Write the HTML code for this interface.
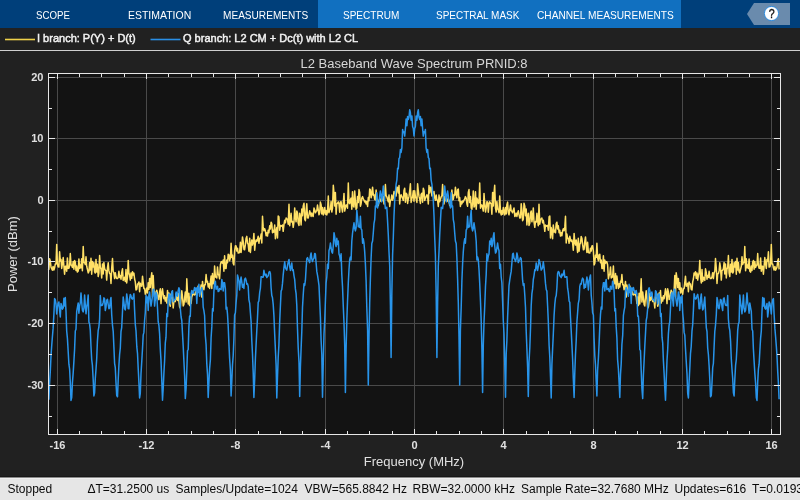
<!DOCTYPE html>
<html><head><meta charset="utf-8"><style>
html,body{margin:0;padding:0;}
body{width:800px;height:500px;overflow:hidden;background:#212121;position:relative;font-family:"Liberation Sans",sans-serif;}
.tb{position:absolute;left:0;top:0;width:800px;height:28px;background:#003f7a;}
.tb .sel{position:absolute;left:318px;top:0;width:363px;height:28px;background:#1170c0;}
.tab{position:absolute;top:7.7px;height:14px;color:#fff;font-size:11px;line-height:14px;white-space:nowrap;}
.tab span{display:inline-block;transform-origin:0 0;}
.leg{position:absolute;top:31.6px;color:#f2f2f2;font-size:11px;font-weight:normal;-webkit-text-stroke:0.45px #f2f2f2;line-height:12px;white-space:nowrap;}
.sb{position:absolute;left:0;top:476px;width:800px;height:24px;background:linear-gradient(#181818 0 1px,#8a8a8a 1px 2px,#f0f0f0 2px 3px,#e6e6e6 3px);}
.sb span{position:absolute;top:7px;font-size:12px;line-height:13px;color:#0a0a0a;white-space:nowrap;}
svg{position:absolute;left:0;top:0;will-change:transform;}
.tb,.sb,.leg{will-change:transform;}
</style></head><body>
<div class="tb"><div class="sel"></div><div class="tab" style="left:35.70px"><span style="transform:scaleX(0.88)">SCOPE</span></div><div class="tab" style="left:127.55px"><span style="transform:scaleX(0.952)">ESTIMATION</span></div><div class="tab" style="left:222.55px"><span style="transform:scaleX(0.917)">MEASUREMENTS</span></div><div class="tab" style="left:342.55px"><span style="transform:scaleX(0.911)">SPECTRUM</span></div><div class="tab" style="left:435.55px"><span style="transform:scaleX(0.907)">SPECTRAL MASK</span></div><div class="tab" style="left:536.80px"><span style="transform:scaleX(0.923)">CHANNEL MEASUREMENTS</span></div></div>
<svg width="800" height="500" viewBox="0 0 800 500">
<polygon points="747,14 754,3 790,3 790,25 754,25" fill="#6a8bad"/>
<circle cx="771.5" cy="13.5" r="7.1" fill="#fff" stroke="#2d8ce0" stroke-width="1"/>
<text x="771.6" y="18" text-anchor="middle" font-family="Liberation Sans" font-size="12.5" fill="#111" stroke="#111" stroke-width="0.35" transform="translate(771.6 0) scale(0.85 1) translate(-771.6 0)">?</text>
<line x1="5" y1="39.5" x2="35" y2="39.5" stroke="#f0d24a" stroke-width="1.6"/>
<line x1="150.5" y1="39.5" x2="180.5" y2="39.5" stroke="#2a8fe6" stroke-width="1.6"/>
<line x1="0" y1="50.5" x2="800" y2="50.5" stroke="#cfcfcf" stroke-width="1"/>
<rect x="48.5" y="73.5" width="732" height="361" fill="#131313" stroke="none"/>
<path d="M57.5 74V434M146.5 74V434M235.5 74V434M325.5 74V434M414.5 74V434M503.5 74V434M593.5 74V434M682.5 74V434M771.5 74V434M49 77.5H780M49 138.5H780M49 200.5H780M49 261.5H780M49 323.5H780M49 385.5H780" stroke="#4a4a4a" stroke-width="1" fill="none"/>
<g fill="none" stroke-width="1.5" stroke-linejoin="round">
<path d="M48.1 268.9 48.9 269.4 49.6 258.7 50.3 260.8 51.0 267.2 51.7 268.6 52.4 270.2 53.1 266.5 53.9 270.0 54.6 267.8 55.3 263.9 56.0 264.0 56.7 244.4 57.4 263.5 58.1 266.8 58.9 267.1 59.6 251.7 60.3 261.1 61.0 259.4 61.7 268.5 62.4 263.9 63.2 257.6 63.9 266.2 64.6 274.2 65.3 266.3 66.0 266.3 66.7 271.2 67.4 257.9 68.2 268.4 68.9 268.2 69.6 265.8 70.3 253.6 71.0 264.9 71.7 265.4 72.4 267.4 73.2 261.6 73.9 269.3 74.6 260.5 75.3 262.0 76.0 270.4 76.7 266.1 77.4 272.1 78.2 271.1 78.9 258.9 79.6 268.4 80.3 264.9 81.0 267.7 81.7 258.8 82.4 270.7 83.2 246.4 83.9 262.6 84.6 262.6 85.3 264.6 86.0 256.7 86.7 266.3 87.4 269.2 88.2 272.9 88.9 271.6 89.6 262.5 90.3 270.1 91.0 258.3 91.7 274.3 92.4 261.4 93.2 267.1 93.9 262.7 94.6 271.9 95.3 273.0 96.0 259.4 96.7 271.9 97.4 264.3 98.2 276.5 98.9 273.1 99.6 255.6 100.3 267.1 101.0 269.2 101.7 277.9 102.5 264.0 103.2 274.0 103.9 262.5 104.6 268.5 105.3 270.3 106.0 270.4 106.7 280.1 107.5 267.6 108.2 262.8 108.9 270.9 109.6 273.5 110.3 273.9 111.0 283.4 111.7 268.0 112.5 258.6 113.2 271.2 113.9 273.1 114.6 278.6 115.3 272.7 116.0 276.8 116.7 278.6 117.5 278.6 118.2 277.4 118.9 271.3 119.6 277.4 120.3 275.6 121.0 279.2 121.7 272.6 122.5 268.8 123.2 280.4 123.9 279.3 124.6 277.3 125.3 281.4 126.0 269.6 126.7 283.0 127.5 277.0 128.2 260.4 128.9 273.0 129.6 275.2 130.3 280.1 131.0 273.0 131.7 278.3 132.5 271.7 133.2 274.9 133.9 273.1 134.6 279.0 135.3 281.9 136.0 290.0 136.8 289.2 137.5 284.1 138.2 284.0 138.9 281.9 139.6 291.8 140.3 283.3 141.0 285.4 141.8 286.2 142.5 276.2 143.2 282.3 143.9 288.6 144.6 288.4 145.3 294.2 146.0 291.9 146.8 287.9 147.5 293.0 148.2 282.8 148.9 289.2 149.6 278.5 150.3 287.5 151.0 278.5 151.8 272.8 152.5 296.4 153.2 275.6 153.9 290.7 154.6 291.1 155.3 300.2 156.0 295.2 156.8 290.2 157.5 294.0 158.2 298.5 158.9 299.6 159.6 291.9 160.3 288.8 161.0 303.6 161.8 292.6 162.5 288.8 163.2 294.3 163.9 298.7 164.6 295.8 165.3 301.1 166.0 297.6 166.8 303.1 167.5 290.5 168.2 297.1 168.9 292.9 169.6 303.7 170.3 306.3 171.0 294.1 171.8 297.8 172.5 297.1 173.2 308.0 173.9 301.4 174.6 300.0 175.3 301.6 176.1 293.8 176.8 299.0 177.5 300.5 178.2 293.3 178.9 301.3 179.6 306.8 180.3 308.0 181.1 298.3 181.8 290.8 182.5 296.7 183.2 306.0 183.9 304.4 184.6 298.4 185.3 291.9 186.1 302.1 186.8 278.8 187.5 293.0 188.2 303.9 188.9 293.3 189.6 305.6 190.3 297.0 191.1 303.4 191.8 296.7 192.5 295.4 193.2 290.9 193.9 294.5 194.6 295.0 195.3 294.4 196.1 291.2 196.8 295.3 197.5 290.7 198.2 285.9 198.9 289.3 199.6 289.9 200.3 292.3 201.1 285.0 201.8 297.1 202.5 281.4 203.2 286.5 203.9 289.7 204.6 284.8 205.3 284.7 206.1 274.5 206.8 282.1 207.5 281.3 208.2 286.9 208.9 283.8 209.6 288.5 210.4 282.1 211.1 276.0 211.8 288.4 212.5 273.6 213.2 283.8 213.9 282.8 214.6 266.0 215.4 276.8 216.1 277.3 216.8 277.9 217.5 266.9 218.2 274.0 218.9 275.4 219.6 278.8 220.4 264.8 221.1 262.0 221.8 261.6 222.5 263.2 223.2 260.1 223.9 271.2 224.6 255.7 225.4 268.5 226.1 268.5 226.8 259.9 227.5 262.7 228.2 254.3 228.9 254.9 229.6 260.7 230.4 257.8 231.1 243.2 231.8 257.4 232.5 255.2 233.2 263.5 233.9 264.9 234.6 251.2 235.4 245.8 236.1 246.0 236.8 251.1 237.5 248.2 238.2 253.1 238.9 252.9 239.6 252.5 240.4 242.3 241.1 252.4 241.8 245.6 242.5 236.9 243.2 241.3 243.9 249.3 244.6 249.8 245.4 244.4 246.1 238.2 246.8 236.4 247.5 243.1 248.2 244.3 248.9 251.2 249.7 238.3 250.4 252.5 251.1 245.3 251.8 239.9 252.5 245.1 253.2 242.1 253.9 233.4 254.7 250.2 255.4 242.8 256.1 240.0 256.8 241.4 257.5 239.3 258.2 236.2 258.9 243.3 259.7 238.3 260.4 238.4 261.1 234.1 261.8 243.0 262.5 216.3 263.2 226.9 263.9 230.8 264.7 228.7 265.4 230.9 266.1 235.7 266.8 232.7 267.5 236.1 268.2 230.3 268.9 232.7 269.7 225.8 270.4 228.9 271.1 222.2 271.8 223.5 272.5 232.7 273.2 230.4 273.9 232.1 274.7 225.0 275.4 238.7 276.1 231.4 276.8 227.6 277.5 237.9 278.2 216.0 278.9 216.7 279.7 230.2 280.4 225.4 281.1 225.6 281.8 226.3 282.5 225.0 283.2 231.3 284.0 224.4 284.7 220.3 285.4 222.8 286.1 218.0 286.8 218.8 287.5 219.5 288.2 224.2 289.0 204.3 289.7 225.7 290.4 220.3 291.1 213.3 291.8 222.1 292.5 221.5 293.2 227.3 294.0 221.9 294.7 207.9 295.4 217.4 296.1 221.8 296.8 211.0 297.5 213.1 298.2 223.1 299.0 225.4 299.7 213.2 300.4 216.8 301.1 224.9 301.8 209.1 302.5 215.7 303.2 206.2 304.0 203.2 304.7 219.3 305.4 220.8 306.1 210.2 306.8 203.7 307.5 217.9 308.2 218.1 309.0 214.6 309.7 210.8 310.4 213.2 311.1 216.4 311.8 213.1 312.5 215.6 313.2 216.5 314.0 208.0 314.7 209.9 315.4 212.8 316.1 211.4 316.8 210.8 317.5 205.1 318.2 209.3 319.0 214.8 319.7 212.7 320.4 202.1 321.1 204.6 321.8 214.0 322.5 207.4 323.3 214.9 324.0 211.6 324.7 207.5 325.4 214.2 326.1 210.5 326.8 214.9 327.5 211.9 328.3 196.1 329.0 212.7 329.7 209.7 330.4 209.0 331.1 201.6 331.8 212.0 332.5 208.2 333.3 185.3 334.0 193.4 334.7 205.9 335.4 192.4 336.1 214.2 336.8 204.0 337.5 203.2 338.3 201.8 339.0 204.3 339.7 212.2 340.4 202.0 341.1 201.8 341.8 207.9 342.5 212.0 343.3 203.3 344.0 193.4 344.7 211.1 345.4 207.9 346.1 205.0 346.8 204.9 347.5 208.2 348.3 183.1 349.0 202.7 349.7 203.6 350.4 199.7 351.1 198.1 351.8 209.3 352.5 191.7 353.3 205.8 354.0 207.0 354.7 190.9 355.4 201.7 356.1 209.4 356.8 208.0 357.5 196.6 358.3 202.6 359.0 189.6 359.7 192.4 360.4 206.3 361.1 203.7 361.8 198.0 362.6 196.6 363.3 199.0 364.0 200.1 364.7 201.9 365.4 201.1 366.1 203.9 366.8 201.6 367.6 206.5 368.3 197.5 369.0 200.8 369.7 189.0 370.4 189.7 371.1 197.8 371.8 194.4 372.6 187.2 373.3 195.3 374.0 194.6 374.7 199.3 375.4 200.0 376.1 190.0 376.8 198.7 377.6 201.7 378.3 205.6 379.0 200.6 379.7 198.8 380.4 200.8 381.1 201.5 381.8 194.4 382.6 200.4 383.3 196.3 384.0 204.0 384.7 196.6 385.4 184.5 386.1 195.5 386.8 196.8 387.6 199.5 388.3 201.8 389.0 195.1 389.7 206.5 390.4 200.3 391.1 200.1 391.8 195.1 392.6 200.2 393.3 197.7 394.0 191.6 394.7 192.2 395.4 194.0 396.1 196.0 396.9 187.0 397.6 187.8 398.3 193.0 399.0 185.5 399.7 204.0 400.4 196.5 401.1 194.8 401.9 196.9 402.6 198.3 403.3 200.4 404.0 190.4 404.7 188.3 405.4 202.2 406.1 193.2 406.9 194.4 407.6 203.5 408.3 199.0 409.0 196.4 409.7 190.7 410.4 183.7 411.1 202.4 411.9 198.6 412.6 196.6 413.3 190.8 414.0 201.2 414.7 190.8 415.4 196.6 416.1 198.6 416.9 202.4 417.6 183.7 418.3 190.7 419.0 196.4 419.7 199.0 420.4 203.5 421.1 194.4 421.9 193.2 422.6 202.2 423.3 188.3 424.0 190.4 424.7 200.4 425.4 198.3 426.1 196.9 426.9 194.8 427.6 196.5 428.3 204.0 429.0 185.5 429.7 193.0 430.4 187.8 431.1 187.0 431.9 196.0 432.6 194.0 433.3 192.2 434.0 191.6 434.7 197.7 435.4 200.2 436.2 195.1 436.9 200.1 437.6 200.3 438.3 206.5 439.0 195.1 439.7 201.8 440.4 199.5 441.2 196.8 441.9 195.5 442.6 184.5 443.3 196.6 444.0 204.0 444.7 196.3 445.4 200.4 446.2 194.4 446.9 201.5 447.6 200.8 448.3 198.8 449.0 200.6 449.7 205.6 450.4 201.7 451.2 198.7 451.9 190.0 452.6 200.0 453.3 199.3 454.0 194.6 454.7 195.3 455.4 187.2 456.2 194.4 456.9 197.8 457.6 189.7 458.3 189.0 459.0 200.8 459.7 197.5 460.4 206.5 461.2 201.6 461.9 203.9 462.6 201.1 463.3 201.9 464.0 200.1 464.7 199.0 465.4 196.6 466.2 198.0 466.9 203.7 467.6 206.3 468.3 192.4 469.0 189.6 469.7 202.6 470.5 196.6 471.2 208.0 471.9 209.4 472.6 201.7 473.3 190.9 474.0 207.0 474.7 205.8 475.5 191.7 476.2 209.3 476.9 198.1 477.6 199.7 478.3 203.6 479.0 202.7 479.7 183.1 480.5 208.2 481.2 204.9 481.9 205.0 482.6 207.9 483.3 211.1 484.0 193.4 484.7 203.3 485.5 212.0 486.2 207.9 486.9 201.8 487.6 202.0 488.3 212.2 489.0 204.3 489.7 201.8 490.5 203.2 491.2 204.0 491.9 214.2 492.6 192.4 493.3 205.9 494.0 193.4 494.7 185.3 495.5 208.2 496.2 212.0 496.9 201.6 497.6 209.0 498.3 209.7 499.0 212.7 499.7 196.1 500.5 211.9 501.2 214.9 501.9 210.5 502.6 214.2 503.3 207.5 504.0 211.6 504.7 214.9 505.5 207.4 506.2 214.0 506.9 204.6 507.6 202.1 508.3 212.7 509.0 214.8 509.8 209.3 510.5 205.1 511.2 210.8 511.9 211.4 512.6 212.8 513.3 209.9 514.0 208.0 514.8 216.5 515.5 215.6 516.2 213.1 516.9 216.4 517.6 213.2 518.3 210.8 519.0 214.6 519.8 218.1 520.5 217.9 521.2 203.7 521.9 210.2 522.6 220.8 523.3 219.3 524.0 203.2 524.8 206.2 525.5 215.7 526.2 209.1 526.9 224.9 527.6 216.8 528.3 213.2 529.0 225.4 529.8 223.1 530.5 213.1 531.2 211.0 531.9 221.8 532.6 217.4 533.3 207.9 534.0 221.9 534.8 227.3 535.5 221.5 536.2 222.1 536.9 213.3 537.6 220.3 538.3 225.7 539.0 204.3 539.8 224.2 540.5 219.5 541.2 218.8 541.9 218.0 542.6 222.8 543.3 220.3 544.0 224.4 544.8 231.3 545.5 225.0 546.2 226.3 546.9 225.6 547.6 225.4 548.3 230.2 549.1 216.7 549.8 216.0 550.5 237.9 551.2 227.6 551.9 231.4 552.6 238.7 553.3 225.0 554.1 232.1 554.8 230.4 555.5 232.7 556.2 223.5 556.9 222.2 557.6 228.9 558.3 225.8 559.1 232.7 559.8 230.3 560.5 236.1 561.2 232.7 561.9 235.7 562.6 230.9 563.3 228.7 564.1 230.8 564.8 226.9 565.5 216.3 566.2 243.0 566.9 234.1 567.6 238.4 568.3 238.3 569.1 243.3 569.8 236.2 570.5 239.3 571.2 241.4 571.9 240.0 572.6 242.8 573.3 250.2 574.1 233.4 574.8 242.1 575.5 245.1 576.2 239.9 576.9 245.3 577.6 252.5 578.3 238.3 579.1 251.2 579.8 244.3 580.5 243.1 581.2 236.4 581.9 238.2 582.6 244.4 583.4 249.8 584.1 249.3 584.8 241.3 585.5 236.9 586.2 245.6 586.9 252.4 587.6 242.3 588.4 252.5 589.1 252.9 589.8 253.1 590.5 248.2 591.2 251.1 591.9 246.0 592.6 245.8 593.4 251.2 594.1 264.9 594.8 263.5 595.5 255.2 596.2 257.4 596.9 243.2 597.6 257.8 598.4 260.7 599.1 254.9 599.8 254.3 600.5 262.7 601.2 259.9 601.9 268.5 602.6 268.5 603.4 255.7 604.1 271.2 604.8 260.1 605.5 263.2 606.2 261.6 606.9 262.0 607.6 264.8 608.4 278.8 609.1 275.4 609.8 274.0 610.5 266.9 611.2 277.9 611.9 277.3 612.6 276.8 613.4 266.0 614.1 282.8 614.8 283.8 615.5 273.6 616.2 288.4 616.9 276.0 617.6 282.1 618.4 288.5 619.1 283.8 619.8 286.9 620.5 281.3 621.2 282.1 621.9 274.5 622.7 284.7 623.4 284.8 624.1 289.7 624.8 286.5 625.5 281.4 626.2 297.1 626.9 285.0 627.7 292.3 628.4 289.9 629.1 289.3 629.8 285.9 630.5 290.7 631.2 295.3 631.9 291.2 632.7 294.4 633.4 295.0 634.1 294.5 634.8 290.9 635.5 295.4 636.2 296.7 636.9 303.4 637.7 297.0 638.4 305.6 639.1 293.3 639.8 303.9 640.5 293.0 641.2 278.8 641.9 302.1 642.7 291.9 643.4 298.4 644.1 304.4 644.8 306.0 645.5 296.7 646.2 290.8 646.9 298.3 647.7 308.0 648.4 306.8 649.1 301.3 649.8 293.3 650.5 300.5 651.2 299.0 651.9 293.8 652.7 301.6 653.4 300.0 654.1 301.4 654.8 308.0 655.5 297.1 656.2 297.8 657.0 294.1 657.7 306.3 658.4 303.7 659.1 292.9 659.8 297.1 660.5 290.5 661.2 303.1 662.0 297.6 662.7 301.1 663.4 295.8 664.1 298.7 664.8 294.3 665.5 288.8 666.2 292.6 667.0 303.6 667.7 288.8 668.4 291.9 669.1 299.6 669.8 298.5 670.5 294.0 671.2 290.2 672.0 295.2 672.7 300.2 673.4 291.1 674.1 290.7 674.8 275.6 675.5 296.4 676.2 272.8 677.0 278.5 677.7 287.5 678.4 278.5 679.1 289.2 679.8 282.8 680.5 293.0 681.2 287.9 682.0 291.9 682.7 294.2 683.4 288.4 684.1 288.6 684.8 282.3 685.5 276.2 686.2 286.2 687.0 285.4 687.7 283.3 688.4 291.8 689.1 281.9 689.8 284.0 690.5 284.1 691.2 289.2 692.0 290.0 692.7 281.9 693.4 279.0 694.1 273.1 694.8 274.9 695.5 271.7 696.3 278.3 697.0 273.0 697.7 280.1 698.4 275.2 699.1 273.0 699.8 260.4 700.5 277.0 701.3 283.0 702.0 269.6 702.7 281.4 703.4 277.3 704.1 279.3 704.8 280.4 705.5 268.8 706.3 272.6 707.0 279.2 707.7 275.6 708.4 277.4 709.1 271.3 709.8 277.4 710.5 278.6 711.3 278.6 712.0 276.8 712.7 272.7 713.4 278.6 714.1 273.1 714.8 271.2 715.5 258.6 716.3 268.0 717.0 283.4 717.7 273.9 718.4 273.5 719.1 270.9 719.8 262.8 720.5 267.6 721.3 280.1 722.0 270.4 722.7 270.3 723.4 268.5 724.1 262.5 724.8 274.0 725.5 264.0 726.3 277.9 727.0 269.2 727.7 267.1 728.4 255.6 729.1 273.1 729.8 276.5 730.6 264.3 731.3 271.9 732.0 259.4 732.7 273.0 733.4 271.9 734.1 262.7 734.8 267.1 735.6 261.4 736.3 274.3 737.0 258.3 737.7 270.1 738.4 262.5 739.1 271.6 739.8 272.9 740.6 269.2 741.3 266.3 742.0 256.7 742.7 264.6 743.4 262.6 744.1 262.6 744.8 246.4 745.6 270.7 746.3 258.8 747.0 267.7 747.7 264.9 748.4 268.4 749.1 258.9 749.8 271.1 750.6 272.1 751.3 266.1 752.0 270.4 752.7 262.0 753.4 260.5 754.1 269.3 754.8 261.6 755.6 267.4 756.3 265.4 757.0 264.9 757.7 253.6 758.4 265.8 759.1 268.2 759.8 268.4 760.6 257.9 761.3 271.2 762.0 266.3 762.7 266.3 763.4 274.2 764.1 266.2 764.8 257.6 765.6 263.9 766.3 268.5 767.0 259.4 767.7 261.1 768.4 251.7 769.1 267.1 769.9 266.8 770.6 263.5 771.3 244.4 772.0 264.0 772.7 263.9 773.4 267.8 774.1 270.0 774.9 266.5 775.6 270.2 776.3 268.6 777.0 267.2 777.7 260.8 778.4 258.7 779.1 269.4" stroke="#ffe066"/>
<path d="M48.1 399.3 48.9 399.3 49.6 383.0 50.3 371.3 51.0 356.0 51.7 345.8 52.4 336.7 53.1 328.4 53.9 314.1 54.6 298.6 55.3 299.7 56.0 303.9 56.7 314.0 57.4 307.3 58.1 303.3 58.9 302.0 59.6 310.7 60.3 317.0 61.0 303.5 61.7 306.2 62.4 309.2 63.2 307.9 63.9 298.2 64.6 306.0 65.3 297.5 66.0 311.0 66.7 331.1 67.4 338.1 68.2 351.7 68.9 364.2 69.6 369.0 70.3 382.1 71.0 400.4 71.7 397.6 72.4 383.1 73.2 372.6 73.9 361.1 74.6 349.0 75.3 331.0 76.0 329.2 76.7 311.3 77.4 307.6 78.2 303.0 78.9 313.3 79.6 305.8 80.3 302.8 81.0 292.9 81.7 302.0 82.4 310.2 83.2 311.9 83.9 308.2 84.6 295.0 85.3 304.9 86.0 313.8 86.7 307.0 87.4 303.1 88.2 294.9 88.9 321.9 89.6 323.9 90.3 330.4 91.0 346.5 91.7 359.5 92.4 365.1 93.2 379.7 93.9 395.9 94.6 392.8 95.3 378.2 96.0 369.3 96.7 358.9 97.4 341.6 98.2 330.4 98.9 326.8 99.6 319.2 100.3 295.6 101.0 305.6 101.7 305.5 102.5 305.0 103.2 302.4 103.9 297.8 104.6 298.9 105.3 310.5 106.0 307.0 106.7 300.2 107.5 299.4 108.2 304.5 108.9 308.7 109.6 307.9 110.3 300.7 111.0 297.5 111.7 314.7 112.5 325.3 113.2 331.3 113.9 346.9 114.6 363.3 115.3 367.6 116.0 382.8 116.7 395.3 117.5 396.8 118.2 379.7 118.9 365.5 119.6 354.5 120.3 348.0 121.0 331.5 121.7 327.6 122.5 311.2 123.2 297.1 123.9 302.0 124.6 308.7 125.3 310.0 126.0 304.2 126.7 293.9 127.5 299.6 128.2 308.6 128.9 308.8 129.6 298.6 130.3 294.4 131.0 295.9 131.7 298.6 132.5 299.1 133.2 296.9 133.9 293.7 134.6 310.1 135.3 324.5 136.0 330.8 136.8 346.7 137.5 353.3 138.2 368.4 138.9 381.9 139.6 398.0 140.3 393.3 141.0 373.9 141.8 360.8 142.5 348.8 143.2 335.1 143.9 332.4 144.6 320.3 145.3 312.5 146.0 295.5 146.8 302.8 147.5 297.1 148.2 310.5 148.9 294.9 149.6 292.1 150.3 299.4 151.0 306.1 151.8 300.9 152.5 295.6 153.2 289.3 153.9 289.5 154.6 306.1 155.3 299.4 156.0 292.5 156.8 294.6 157.5 307.9 158.2 321.7 158.9 325.3 159.6 333.6 160.3 349.1 161.0 360.4 161.8 380.9 162.5 400.2 163.2 388.4 163.9 373.1 164.6 360.6 165.3 342.8 166.0 337.2 166.8 313.5 167.5 316.4 168.2 300.6 168.9 293.9 169.6 294.7 170.3 304.0 171.0 298.4 171.8 291.7 172.5 290.7 173.2 301.8 173.9 300.8 174.6 299.6 175.3 299.5 176.1 292.0 176.8 294.6 177.5 296.2 178.2 290.6 178.9 287.8 179.6 289.5 180.3 308.3 181.1 317.0 181.8 320.5 182.5 333.4 183.2 346.1 183.9 361.0 184.6 375.1 185.3 398.6 186.1 388.1 186.8 370.5 187.5 350.6 188.2 349.6 188.9 326.9 189.6 316.1 190.3 316.3 191.1 294.0 191.8 290.4 192.5 293.0 193.2 293.3 193.9 290.7 194.6 287.4 195.3 290.2 196.1 287.9 196.8 303.4 197.5 287.6 198.2 292.5 198.9 284.2 199.6 296.2 200.3 293.7 201.1 289.3 201.8 287.5 202.5 291.1 203.2 307.2 203.9 310.7 204.6 315.5 205.3 335.4 206.1 344.6 206.8 363.9 207.5 374.1 208.2 397.5 208.9 382.7 209.6 368.9 210.4 359.6 211.1 337.8 211.8 326.9 212.5 308.8 213.2 311.0 213.9 291.8 214.6 283.1 215.4 281.3 216.1 289.2 216.8 288.5 217.5 286.2 218.2 291.6 218.9 291.2 219.6 288.6 220.4 289.3 221.1 289.6 221.8 279.5 222.5 283.1 223.2 290.9 223.9 282.6 224.6 282.8 225.4 288.9 226.1 309.1 226.8 307.1 227.5 314.1 228.2 326.3 228.9 343.4 229.6 358.1 230.4 370.3 231.1 395.9 231.8 381.3 232.5 364.7 233.2 355.7 233.9 338.8 234.6 314.9 235.4 312.8 236.1 302.5 236.8 295.1 237.5 274.9 238.2 277.6 238.9 281.4 239.6 290.0 240.4 281.0 241.1 277.1 241.8 282.1 242.5 287.3 243.2 284.6 243.9 288.4 244.6 279.3 245.4 278.1 246.1 280.2 246.8 284.2 247.5 283.8 248.2 286.4 248.9 299.6 249.7 303.3 250.4 312.7 251.1 321.7 251.8 340.5 252.5 354.2 253.2 372.5 253.9 397.5 254.7 378.5 255.4 358.7 256.1 344.4 256.8 330.5 257.5 317.5 258.2 302.4 258.9 301.0 259.7 292.4 260.4 288.2 261.1 276.8 261.8 276.7 262.5 277.3 263.2 277.1 263.9 270.3 264.7 274.4 265.4 275.6 266.1 274.1 266.8 277.6 267.5 276.4 268.2 275.9 268.9 272.3 269.7 271.5 270.4 273.6 271.1 287.8 271.8 295.6 272.5 297.8 273.2 304.4 273.9 315.1 274.7 334.4 275.4 349.1 276.1 364.6 276.8 397.9 277.5 376.7 278.2 357.2 278.9 345.1 279.7 321.1 280.4 305.7 281.1 291.1 281.8 289.5 282.5 283.4 283.2 274.8 284.0 267.2 284.7 261.8 285.4 267.7 286.1 269.0 286.8 270.1 287.5 265.6 288.2 262.1 289.0 259.4 289.7 266.7 290.4 270.4 291.1 266.9 291.8 263.0 292.5 270.5 293.2 269.7 294.0 275.8 294.7 279.5 295.4 288.9 296.1 293.6 296.8 305.6 297.5 328.8 298.2 347.7 299.0 362.4 299.7 396.6 300.4 366.9 301.1 348.7 301.8 331.2 302.5 307.2 303.2 295.2 304.0 283.8 304.7 285.5 305.4 280.2 306.1 268.5 306.8 258.6 307.5 257.6 308.2 259.5 309.0 260.9 309.7 262.6 310.4 256.1 311.1 252.9 311.8 258.7 312.5 261.6 313.2 259.2 314.0 258.3 314.7 253.4 315.4 254.1 316.1 262.8 316.8 271.4 317.5 275.1 318.2 279.6 319.0 285.6 319.7 301.3 320.4 317.0 321.1 340.0 321.8 354.3 322.5 397.3 323.3 361.5 324.0 333.8 324.7 320.7 325.4 301.3 326.1 282.9 326.8 277.0 327.5 264.3 328.3 268.6 329.0 250.4 329.7 248.3 330.4 243.0 331.1 248.0 331.8 251.8 332.5 253.1 333.3 245.6 334.0 232.7 334.7 236.4 335.4 243.8 336.1 246.6 336.8 238.3 337.5 244.4 338.3 241.0 339.0 254.1 339.7 256.1 340.4 260.8 341.1 253.8 341.8 274.4 342.5 286.3 343.3 306.7 344.0 322.6 344.7 345.2 345.4 392.5 346.1 348.9 346.8 320.9 347.5 301.8 348.3 282.9 349.0 269.5 349.7 259.5 350.4 256.9 351.1 260.0 351.8 241.2 352.5 233.5 353.3 227.6 354.0 222.8 354.7 228.2 355.4 230.9 356.1 227.9 356.8 210.2 357.5 216.5 358.3 226.7 359.0 226.1 359.7 227.4 360.4 216.3 361.1 228.9 361.8 229.9 362.6 243.2 363.3 238.8 364.0 243.2 364.7 251.6 365.4 263.9 366.1 280.6 366.8 307.3 367.6 330.2 368.3 385.0 369.0 336.9 369.7 302.6 370.4 278.6 371.1 258.3 371.8 243.5 372.6 241.0 373.3 232.7 374.0 223.3 374.7 219.7 375.4 206.1 376.1 206.9 376.8 192.8 377.6 207.9 378.3 202.9 379.0 203.0 379.7 195.9 380.4 190.9 381.1 194.9 381.8 201.8 382.6 193.8 383.3 186.0 384.0 194.5 384.7 201.9 385.4 208.6 386.1 208.5 386.8 207.2 387.6 221.6 388.3 234.9 389.0 251.8 389.7 265.8 390.4 304.4 391.1 357.5 391.8 295.8 392.6 254.8 393.3 237.3 394.0 215.8 394.7 200.2 395.4 191.4 396.1 184.3 396.9 179.8 397.6 168.3 398.3 168.8 399.0 158.5 399.7 157.6 400.4 149.6 401.1 152.4 401.9 147.8 402.6 129.5 403.3 132.6 404.0 131.8 404.7 136.1 405.4 128.5 406.1 119.0 406.9 125.7 407.6 116.4 408.3 119.6 409.0 117.3 409.7 109.7 410.4 112.7 411.1 120.2 411.9 116.1 412.6 126.5 413.3 128.5 414.0 135.9 414.7 128.5 415.4 126.5 416.1 116.1 416.9 120.2 417.6 112.7 418.3 109.7 419.0 117.3 419.7 119.6 420.4 116.4 421.1 125.7 421.9 119.0 422.6 128.5 423.3 136.1 424.0 131.8 424.7 132.6 425.4 129.5 426.1 147.8 426.9 152.4 427.6 149.6 428.3 157.6 429.0 158.5 429.7 168.8 430.4 168.3 431.1 179.8 431.9 184.3 432.6 191.4 433.3 200.2 434.0 215.8 434.7 237.3 435.4 254.8 436.2 295.8 436.9 357.5 437.6 304.4 438.3 265.8 439.0 251.8 439.7 234.9 440.4 221.6 441.2 207.2 441.9 208.5 442.6 208.6 443.3 201.9 444.0 194.5 444.7 186.0 445.4 193.8 446.2 201.8 446.9 194.9 447.6 190.9 448.3 195.9 449.0 203.0 449.7 202.9 450.4 207.9 451.2 192.8 451.9 206.9 452.6 206.1 453.3 219.7 454.0 223.3 454.7 232.7 455.4 241.0 456.2 243.5 456.9 258.3 457.6 278.6 458.3 302.6 459.0 336.9 459.7 385.0 460.4 330.2 461.2 307.3 461.9 280.6 462.6 263.9 463.3 251.6 464.0 243.2 464.7 238.8 465.4 243.2 466.2 229.9 466.9 228.9 467.6 216.3 468.3 227.4 469.0 226.1 469.7 226.7 470.5 216.5 471.2 210.2 471.9 227.9 472.6 230.9 473.3 228.2 474.0 222.8 474.7 227.6 475.5 233.5 476.2 241.2 476.9 260.0 477.6 256.9 478.3 259.5 479.0 269.5 479.7 282.9 480.5 301.8 481.2 320.9 481.9 348.9 482.6 392.5 483.3 345.2 484.0 322.6 484.7 306.7 485.5 286.3 486.2 274.4 486.9 253.8 487.6 260.8 488.3 256.1 489.0 254.1 489.7 241.0 490.5 244.4 491.2 238.3 491.9 246.6 492.6 243.8 493.3 236.4 494.0 232.7 494.7 245.6 495.5 253.1 496.2 251.8 496.9 248.0 497.6 243.0 498.3 248.3 499.0 250.4 499.7 268.6 500.5 264.3 501.2 277.0 501.9 282.9 502.6 301.3 503.3 320.7 504.0 333.8 504.7 361.5 505.5 397.3 506.2 354.3 506.9 340.0 507.6 317.0 508.3 301.3 509.0 285.6 509.8 279.6 510.5 275.1 511.2 271.4 511.9 262.8 512.6 254.1 513.3 253.4 514.0 258.3 514.8 259.2 515.5 261.6 516.2 258.7 516.9 252.9 517.6 256.1 518.3 262.6 519.0 260.9 519.8 259.5 520.5 257.6 521.2 258.6 521.9 268.5 522.6 280.2 523.3 285.5 524.0 283.8 524.8 295.2 525.5 307.2 526.2 331.2 526.9 348.7 527.6 366.9 528.3 396.6 529.0 362.4 529.8 347.7 530.5 328.8 531.2 305.6 531.9 293.6 532.6 288.9 533.3 279.5 534.0 275.8 534.8 269.7 535.5 270.5 536.2 263.0 536.9 266.9 537.6 270.4 538.3 266.7 539.0 259.4 539.8 262.1 540.5 265.6 541.2 270.1 541.9 269.0 542.6 267.7 543.3 261.8 544.0 267.2 544.8 274.8 545.5 283.4 546.2 289.5 546.9 291.1 547.6 305.7 548.3 321.1 549.1 345.1 549.8 357.2 550.5 376.7 551.2 397.9 551.9 364.6 552.6 349.1 553.3 334.4 554.1 315.1 554.8 304.4 555.5 297.8 556.2 295.6 556.9 287.8 557.6 273.6 558.3 271.5 559.1 272.3 559.8 275.9 560.5 276.4 561.2 277.6 561.9 274.1 562.6 275.6 563.3 274.4 564.1 270.3 564.8 277.1 565.5 277.3 566.2 276.7 566.9 276.8 567.6 288.2 568.3 292.4 569.1 301.0 569.8 302.4 570.5 317.5 571.2 330.5 571.9 344.4 572.6 358.7 573.3 378.5 574.1 397.5 574.8 372.5 575.5 354.2 576.2 340.5 576.9 321.7 577.6 312.7 578.3 303.3 579.1 299.6 579.8 286.4 580.5 283.8 581.2 284.2 581.9 280.2 582.6 278.1 583.4 279.3 584.1 288.4 584.8 284.6 585.5 287.3 586.2 282.1 586.9 277.1 587.6 281.0 588.4 290.0 589.1 281.4 589.8 277.6 590.5 274.9 591.2 295.1 591.9 302.5 592.6 312.8 593.4 314.9 594.1 338.8 594.8 355.7 595.5 364.7 596.2 381.3 596.9 395.9 597.6 370.3 598.4 358.1 599.1 343.4 599.8 326.3 600.5 314.1 601.2 307.1 601.9 309.1 602.6 288.9 603.4 282.8 604.1 282.6 604.8 290.9 605.5 283.1 606.2 279.5 606.9 289.6 607.6 289.3 608.4 288.6 609.1 291.2 609.8 291.6 610.5 286.2 611.2 288.5 611.9 289.2 612.6 281.3 613.4 283.1 614.1 291.8 614.8 311.0 615.5 308.8 616.2 326.9 616.9 337.8 617.6 359.6 618.4 368.9 619.1 382.7 619.8 397.5 620.5 374.1 621.2 363.9 621.9 344.6 622.7 335.4 623.4 315.5 624.1 310.7 624.8 307.2 625.5 291.1 626.2 287.5 626.9 289.3 627.7 293.7 628.4 296.2 629.1 284.2 629.8 292.5 630.5 287.6 631.2 303.4 631.9 287.9 632.7 290.2 633.4 287.4 634.1 290.7 634.8 293.3 635.5 293.0 636.2 290.4 636.9 294.0 637.7 316.3 638.4 316.1 639.1 326.9 639.8 349.6 640.5 350.6 641.2 370.5 641.9 388.1 642.7 398.6 643.4 375.1 644.1 361.0 644.8 346.1 645.5 333.4 646.2 320.5 646.9 317.0 647.7 308.3 648.4 289.5 649.1 287.8 649.8 290.6 650.5 296.2 651.2 294.6 651.9 292.0 652.7 299.5 653.4 299.6 654.1 300.8 654.8 301.8 655.5 290.7 656.2 291.7 657.0 298.4 657.7 304.0 658.4 294.7 659.1 293.9 659.8 300.6 660.5 316.4 661.2 313.5 662.0 337.2 662.7 342.8 663.4 360.6 664.1 373.1 664.8 388.4 665.5 400.2 666.2 380.9 667.0 360.4 667.7 349.1 668.4 333.6 669.1 325.3 669.8 321.7 670.5 307.9 671.2 294.6 672.0 292.5 672.7 299.4 673.4 306.1 674.1 289.5 674.8 289.3 675.5 295.6 676.2 300.9 677.0 306.1 677.7 299.4 678.4 292.1 679.1 294.9 679.8 310.5 680.5 297.1 681.2 302.8 682.0 295.5 682.7 312.5 683.4 320.3 684.1 332.4 684.8 335.1 685.5 348.8 686.2 360.8 687.0 373.9 687.7 393.3 688.4 398.0 689.1 381.9 689.8 368.4 690.5 353.3 691.2 346.7 692.0 330.8 692.7 324.5 693.4 310.1 694.1 293.7 694.8 296.9 695.5 299.1 696.3 298.6 697.0 295.9 697.7 294.4 698.4 298.6 699.1 308.8 699.8 308.6 700.5 299.6 701.3 293.9 702.0 304.2 702.7 310.0 703.4 308.7 704.1 302.0 704.8 297.1 705.5 311.2 706.3 327.6 707.0 331.5 707.7 348.0 708.4 354.5 709.1 365.5 709.8 379.7 710.5 396.8 711.3 395.3 712.0 382.8 712.7 367.6 713.4 363.3 714.1 346.9 714.8 331.3 715.5 325.3 716.3 314.7 717.0 297.5 717.7 300.7 718.4 307.9 719.1 308.7 719.8 304.5 720.5 299.4 721.3 300.2 722.0 307.0 722.7 310.5 723.4 298.9 724.1 297.8 724.8 302.4 725.5 305.0 726.3 305.5 727.0 305.6 727.7 295.6 728.4 319.2 729.1 326.8 729.8 330.4 730.6 341.6 731.3 358.9 732.0 369.3 732.7 378.2 733.4 392.8 734.1 395.9 734.8 379.7 735.6 365.1 736.3 359.5 737.0 346.5 737.7 330.4 738.4 323.9 739.1 321.9 739.8 294.9 740.6 303.1 741.3 307.0 742.0 313.8 742.7 304.9 743.4 295.0 744.1 308.2 744.8 311.9 745.6 310.2 746.3 302.0 747.0 292.9 747.7 302.8 748.4 305.8 749.1 313.3 749.8 303.0 750.6 307.6 751.3 311.3 752.0 329.2 752.7 331.0 753.4 349.0 754.1 361.1 754.8 372.6 755.6 383.1 756.3 397.6 757.0 400.4 757.7 382.1 758.4 369.0 759.1 364.2 759.8 351.7 760.6 338.1 761.3 331.1 762.0 311.0 762.7 297.5 763.4 306.0 764.1 298.2 764.8 307.9 765.6 309.2 766.3 306.2 767.0 303.5 767.7 317.0 768.4 310.7 769.1 302.0 769.9 303.3 770.6 307.3 771.3 314.0 772.0 303.9 772.7 299.7 773.4 298.6 774.1 314.1 774.9 328.4 775.6 336.7 776.3 345.8 777.0 356.0 777.7 371.3 778.4 383.0 779.1 399.3" stroke="#2894ea"/>
</g>
<rect x="48.5" y="73.5" width="732" height="361" fill="none" stroke="#e6e6e6" stroke-width="1"/>
<path d="M57.5 74v5M57.5 434v-5M79.5 74v3M79.5 434v-3M101.5 74v3M101.5 434v-3M124.5 74v3M124.5 434v-3M146.5 74v5M146.5 434v-5M168.5 74v3M168.5 434v-3M191.5 74v3M191.5 434v-3M213.5 74v3M213.5 434v-3M235.5 74v5M235.5 434v-5M258.5 74v3M258.5 434v-3M280.5 74v3M280.5 434v-3M302.5 74v3M302.5 434v-3M325.5 74v5M325.5 434v-5M347.5 74v3M347.5 434v-3M369.5 74v3M369.5 434v-3M392.5 74v3M392.5 434v-3M414.5 74v5M414.5 434v-5M436.5 74v3M436.5 434v-3M459.5 74v3M459.5 434v-3M481.5 74v3M481.5 434v-3M503.5 74v5M503.5 434v-5M526.5 74v3M526.5 434v-3M548.5 74v3M548.5 434v-3M570.5 74v3M570.5 434v-3M593.5 74v5M593.5 434v-5M615.5 74v3M615.5 434v-3M637.5 74v3M637.5 434v-3M660.5 74v3M660.5 434v-3M682.5 74v5M682.5 434v-5M704.5 74v3M704.5 434v-3M727.5 74v3M727.5 434v-3M749.5 74v3M749.5 434v-3M771.5 74v5M771.5 434v-5M49 416.5h3M780 416.5h-3M49 385.5h6M780 385.5h-6M49 354.5h3M780 354.5h-3M49 323.5h6M780 323.5h-6M49 292.5h3M780 292.5h-3M49 261.5h6M780 261.5h-6M49 231.5h3M780 231.5h-3M49 200.5h6M780 200.5h-6M49 169.5h3M780 169.5h-3M49 138.5h6M780 138.5h-6M49 108.5h3M780 108.5h-3M49 77.5h6M780 77.5h-6" stroke="#e6e6e6" stroke-width="1" fill="none"/>
<g fill="#e0e0e0" font-family="Liberation Sans" font-size="11" font-weight="bold" text-anchor="middle"><text x="57.5" y="448.5">-16</text><text x="146.5" y="448.5">-12</text><text x="235.5" y="448.5">-8</text><text x="325.5" y="448.5">-4</text><text x="414.5" y="448.5">0</text><text x="503.5" y="448.5">4</text><text x="593.5" y="448.5">8</text><text x="682.5" y="448.5">12</text><text x="771.5" y="448.5">16</text></g>
<g fill="#e0e0e0" font-family="Liberation Sans" font-size="11" font-weight="bold" text-anchor="end"><text x="43.5" y="80.8">20</text><text x="43.5" y="141.8">10</text><text x="43.5" y="203.8">0</text><text x="43.5" y="264.8">-10</text><text x="43.5" y="326.8">-20</text><text x="43.5" y="388.8">-30</text></g>
<text x="414" y="68.2" text-anchor="middle" font-family="Liberation Sans" font-size="13.7" textLength="227" lengthAdjust="spacingAndGlyphs" fill="#d8d8d8">L2 Baseband Wave Spectrum PRNID:8</text>
<text x="414" y="465.8" text-anchor="middle" font-family="Liberation Sans" font-size="13" fill="#e0e0e0">Frequency (MHz)</text>
<text transform="translate(17 254) rotate(-90)" x="0" y="0" text-anchor="middle" font-family="Liberation Sans" font-size="13" fill="#e0e0e0">Power (dBm)</text>
</svg>
<div class="leg" style="left:37px">I branch: P(Y) + D(t)</div>
<div class="leg" style="left:183px">Q branch: L2 CM + Dc(t) with L2 CL</div>
<div class="sb">
<span style="left:7.5px">Stopped</span>
<span style="left:87.5px">ΔT=31.2500 us</span>
<span style="left:175.5px">Samples/Update=1024</span>
<span style="left:304.5px">VBW=565.8842 Hz</span>
<span style="left:412.5px">RBW=32.0000 kHz</span>
<span style="left:521px">Sample Rate=32.7680 MHz</span>
<span style="left:674.5px">Updates=616</span>
<span style="left:752px">T=0.0193</span>
</div>
</body></html>
